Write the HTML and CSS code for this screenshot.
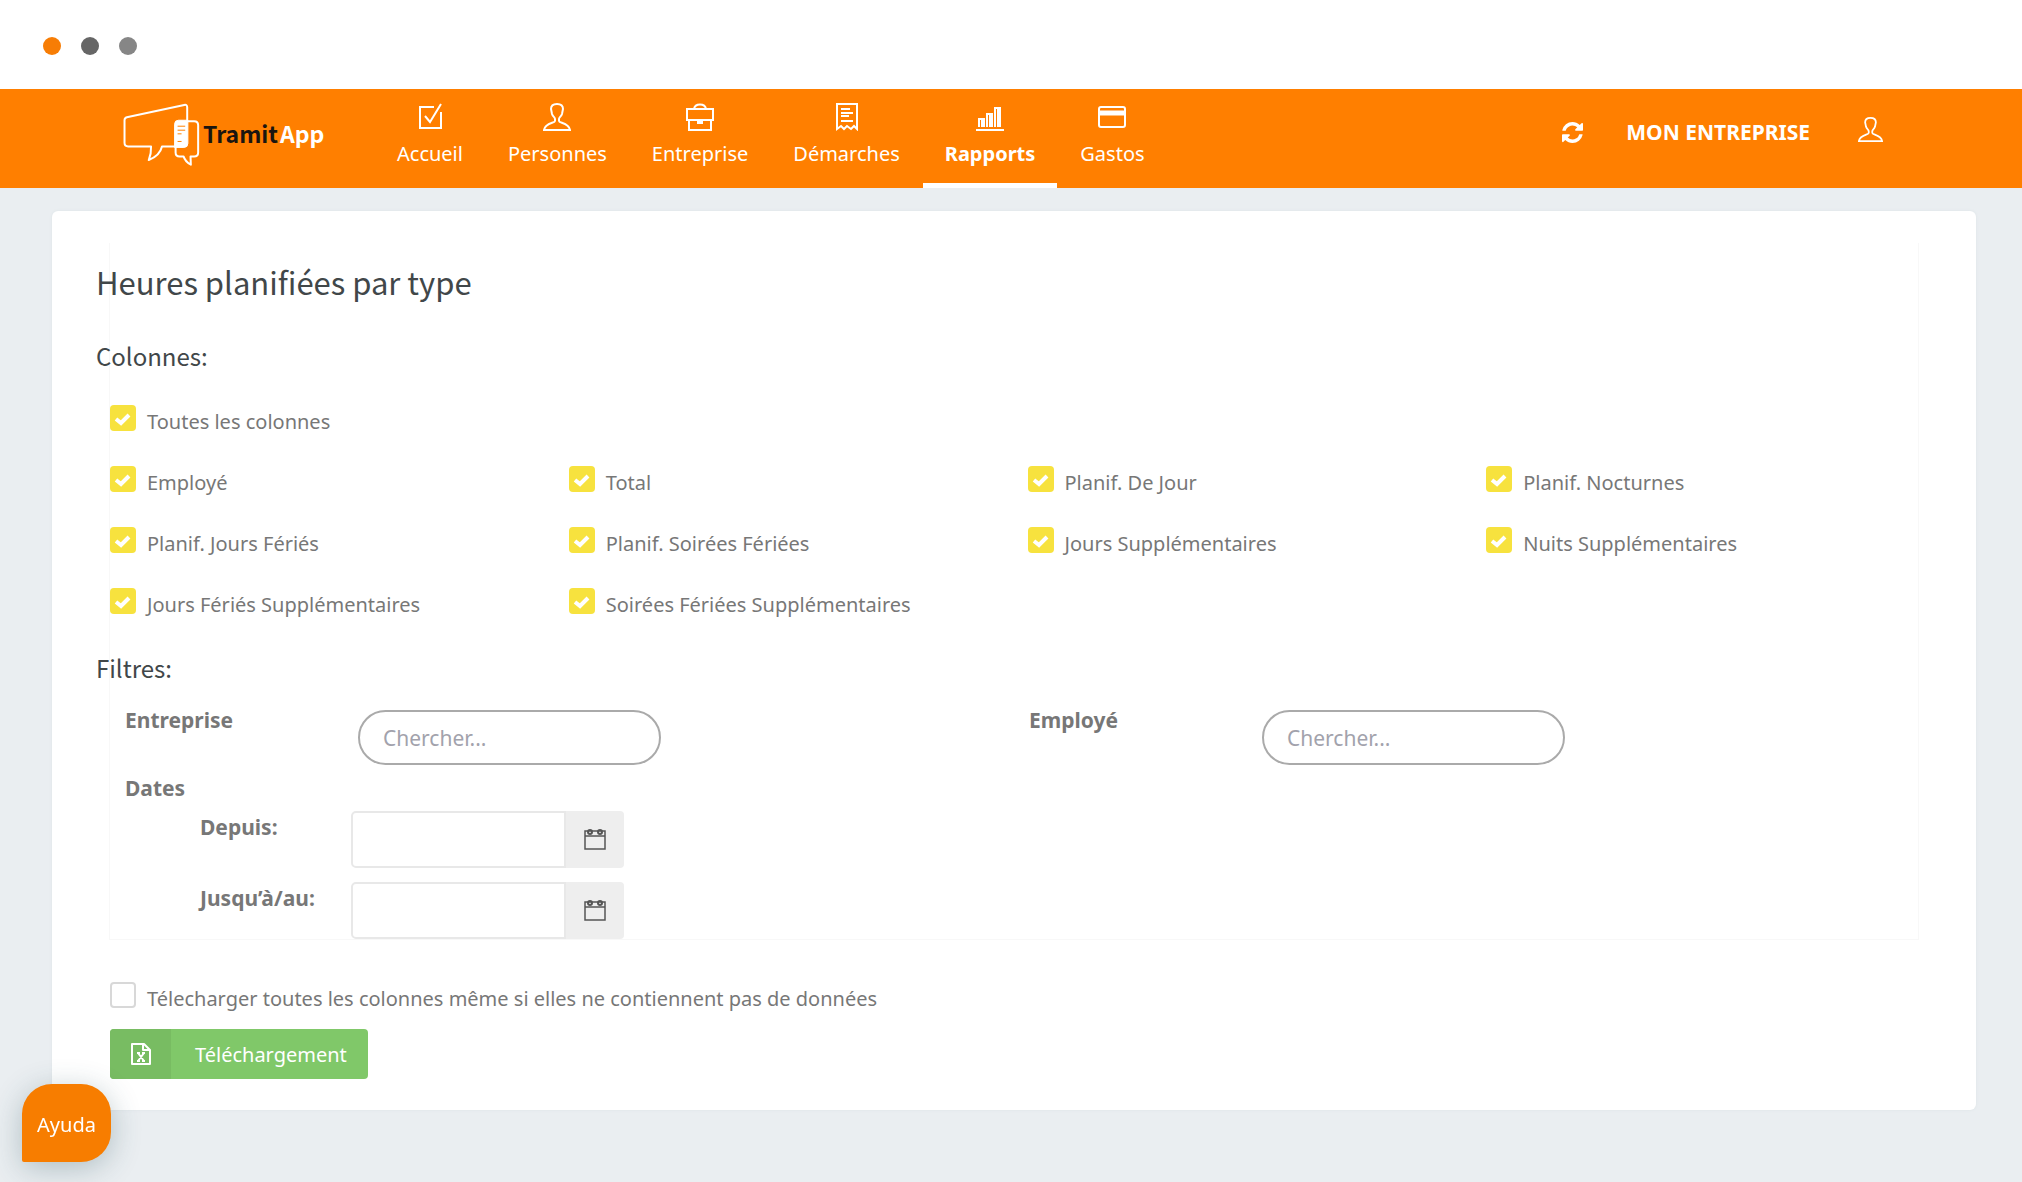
FILE: index.html
```html
<!DOCTYPE html>
<html lang="fr">
<head>
    <meta charset="UTF-8">
    <meta name="viewport" content="width=device-width, initial-scale=1.0">
    <title>Heures planifiées par type - TramitApp</title>
    <link rel="stylesheet" href="styles.css">
</head>
<body>
    <div class="window-bar">
        <span class="dot dot-orange"></span>
        <span class="dot dot-dark"></span>
        <span class="dot dot-grey"></span>
    </div>

    <header class="header">
        <a class="logo" href="#">
            <svg class="logo-mark" viewBox="366 306 234 196" fill="none" stroke="#fff" stroke-width="6" stroke-linejoin="round">
                <path d="M562 362V322q0-9-9-7L380 352q-7 2-7 9v68q0 11 11 11h69q1 22-7 41 34-14 40-41h40"/>
                <path d="M562 364h21q12 0 12 12v82q0 12-12 12h-11l1 25q-17-9-22-25h-12q-12 0-12-12v-20"/>
                <path d="M536 361h28v70q0 12-12 12h-28v-70q0-12 12-12z" fill="#fff" stroke-width="3"/>
                <path d="M533 379h23M533 391h23M533 402h12M533 425h12" stroke="#ff8000" stroke-width="3"/>
            </svg>
            <span class="logo-text">Tramit<span class="logo-app">App</span></span>
        </a>

        <nav class="nav">
            <a class="nav-item" href="#">
                <svg class="nav-icon" viewBox="0 0 28 28" fill="none" stroke="currentColor" stroke-width="2">
                    <path d="M18 4H4v21h21V9"/>
                    <path d="M9 13l5 6L25 1"/>
                </svg>
                Accueil
            </a>
            <a class="nav-item" href="#">
                <svg class="nav-icon" viewBox="0 0 28 28" fill="none" stroke="currentColor" stroke-width="2">
                    <path d="M14 1c4 0 6 2 6 5l-1 5c-1 3-3 3-3 5v2c0 2 10 2 11 9H1c1-7 11-7 11-9v-2c0-2-2-2-3-5L8 6c0-3 2-5 6-5z"/>
                </svg>
                Personnes
            </a>
            <a class="nav-item" href="#">
                <svg class="nav-icon" viewBox="0 0 28 28" fill="none" stroke="currentColor" stroke-width="2">
                    <path d="M1 6h26v11H1zM3 17v10h22V17M8 6c1-6 11-6 12 0"/>
                    <path d="M12 18h4v2h-4z"/>
                </svg>
                Entreprise
            </a>
            <a class="nav-item" href="#">
                <svg class="nav-icon" viewBox="0 0 28 28" fill="none" stroke="currentColor" stroke-width="2">
                    <path d="M4 26V1h20v25l-3-3-3 3-4-3-3 3-3-3z"/>
                    <path d="M8 6h9M8 10h12M8 13h8M8 18h12"/>
                </svg>
                Démarches
            </a>
            <a class="nav-item active" href="#" aria-current="page">
                <svg class="nav-icon" viewBox="0 0 28 28" fill="none" stroke="currentColor" stroke-width="2">
                    <path d="M0 27h28M3 24v-8h5v8M11 24V11h5v13M19 24V5h5v19"/>
                    <path d="M6 16v8M14 11v13M22 5v19"/>
                </svg>
                Rapports
            </a>
            <a class="nav-item" href="#">
                <svg class="nav-icon" viewBox="0 0 28 28" fill="none" stroke="currentColor" stroke-width="2">
                    <rect x="1" y="4" width="26" height="20" rx="2"/>
                    <path d="M1 10h26" stroke-width="5"/>
                </svg>
                Gastos
            </a>
        </nav>

        <div class="header-right">
            <button class="icon-button" type="button" aria-label="Actualiser">
                <svg class="refresh-icon" viewBox="0 0 1536 1536" fill="currentColor">
                    <path d="M1511 928q0 5-1 7-64 268-268 434.500T764 1536q-146 0-282.500-55T238 1324l-129 129q-19 19-45 19t-45-19-19-45V960q0-26 19-45t45-19h448q26 0 45 19t19 45-19 45l-137 137q71 66 161 102t187 36q134 0 250-65t186-179q11-17 53-117 8-23 30-23h192q13 0 22.500 9.500t9.500 22.500zM1536 128v448q0 26-19 45t-45 19h-448q-26 0-45-19t-19-45 19-45l138-138Q969 256 768 256q-134 0-250 65T332 500q-11 17-53 117-8 23-30 23H50q-13 0-22.500-9.500T18 608v-7q65-268 270-434.500T768 0q146 0 284 55.500T1297 212l130-129q19-19 45-19t45 19 19 45z"/>
                </svg>
            </button>
            <a class="company" href="#">MON ENTREPRISE</a>
            <button class="icon-button" type="button" aria-label="Mon compte">
                <svg class="user-icon" viewBox="0 0 28 28" fill="none" stroke="currentColor" stroke-width="2">
                    <path d="M14 1c4 0 6 2 6 5l-1 5c-1 3-3 3-3 5v2c0 2 10 2 11 9H1c1-7 11-7 11-9v-2c0-2-2-2-3-5L8 6c0-3 2-5 6-5z"/>
                </svg>
            </button>
        </div>
    </header>

    <main class="card">
        <div class="panel">
            <h1>Heures planifiées par type</h1>

            <h2>Colonnes:</h2>
            <div class="columns">
                <label class="check check-all"><input type="checkbox" checked><span>Toutes les colonnes</span></label>
                <label class="check"><input type="checkbox" checked><span>Employé</span></label>
                <label class="check"><input type="checkbox" checked><span>Total</span></label>
                <label class="check"><input type="checkbox" checked><span>Planif. De Jour</span></label>
                <label class="check"><input type="checkbox" checked><span>Planif. Nocturnes</span></label>
                <label class="check"><input type="checkbox" checked><span>Planif. Jours Fériés</span></label>
                <label class="check"><input type="checkbox" checked><span>Planif. Soirées Fériées</span></label>
                <label class="check"><input type="checkbox" checked><span>Jours Supplémentaires</span></label>
                <label class="check"><input type="checkbox" checked><span>Nuits Supplémentaires</span></label>
                <label class="check"><input type="checkbox" checked><span>Jours Fériés Supplémentaires</span></label>
                <label class="check"><input type="checkbox" checked><span>Soirées Fériées Supplémentaires</span></label>
            </div>

            <h2>Filtres:</h2>
            <div class="filters">
                <div class="filter">
                    <label for="entreprise">Entreprise</label>
                    <input class="search" id="entreprise" type="text" placeholder="Chercher...">
                </div>
                <div class="filter">
                    <label for="employe">Employé</label>
                    <input class="search" id="employe" type="text" placeholder="Chercher...">
                </div>
            </div>

            <div class="dates">
                <h3>Dates</h3>
                <div class="date-row">
                    <label for="depuis">Depuis:</label>
                    <div class="date-input">
                        <input id="depuis" type="text">
                        <button type="button" aria-label="Choisir la date de début">
                            <svg class="calendar-icon" viewBox="0 0 22 21" fill="none" stroke="currentColor" stroke-width="2">
                                <path d="M1 2h20v18H1zM1 7h20" stroke-width="1.500"/>
                                <circle cx="6" cy="3" r="2"/>
                                <circle cx="16" cy="3" r="2"/>
                            </svg>
                        </button>
                    </div>
                </div>
                <div class="date-row">
                    <label for="jusqua">Jusqu’à/au:</label>
                    <div class="date-input">
                        <input id="jusqua" type="text">
                        <button type="button" aria-label="Choisir la date de fin">
                            <svg class="calendar-icon" viewBox="0 0 22 21" fill="none" stroke="currentColor" stroke-width="2">
                                <path d="M1 2h20v18H1zM1 7h20" stroke-width="1.500"/>
                                <circle cx="6" cy="3" r="2"/>
                                <circle cx="16" cy="3" r="2"/>
                            </svg>
                        </button>
                    </div>
                </div>
            </div>
        </div>

        <div class="actions">
            <label class="check"><input type="checkbox"><span>Télecharger toutes les colonnes même si elles ne contiennent pas de données</span></label>
            <button class="download" type="button">
                <span class="download-icon">
                    <svg viewBox="0 0 20 24" fill="none" stroke="currentColor" stroke-width="2" stroke-linejoin="round">
                        <path d="M1 2h12l6 6v14H1zM12 2v6h7"/>
                        <path d="M7 11l6 8M13 11l-6 8M6 11h3M11 11h3M6 19h3M11 19h3"/>
                    </svg>
                </span>
                <span class="download-text">Téléchargement</span>
            </button>
        </div>
    </main>

    <button class="help" type="button">Ayuda</button>
</body>
</html>
```
FILE: styles.css
```css
* {
    box-sizing: border-box;
}
body {
    margin: 0;
    min-height: 100vh;
    background-color: #eaeef1;
    color: #777;
    font-family: 'Noto Sans', sans-serif;
    font-size: 20px;
    line-height: 30px;
}
a {
    color: inherit;
    text-decoration: none;
}
button, input {
    font: inherit;
}
button {
    border: none;
    cursor: pointer;
}

/* window bar */
.window-bar {
    display: flex;
    gap: 20px;
    padding: 37px 43px 34px;
    background-color: #fff;
}
.dot {
    width: 18px;
    height: 18px;
    border-radius: 50%;
}
.dot-orange {
    background-color: #f77d05;
}
.dot-dark {
    background-color: #666;
}
.dot-grey {
    background-color: #868686;
}

/* header */
.header {
    display: flex;
    padding: 0 139px 0 122px;
    background-color: #ff7f00;
    color: #fff;
}
.logo {
    display: flex;
    align-items: flex-start;
    width: 253px;
    padding-top: 13px;
}
.logo-mark {
    width: 78px;
    height: 65px;
    margin-right: 3px;
}
.logo-text {
    padding-top: 16px;
    color: #1a1510;
    font-family: 'Noto Sans CJK SC', sans-serif;
    font-size: 23px;
    font-weight: 700;
}
.logo-app {
    margin-left: 2px;
    color: #fff;
}
.nav {
    display: flex;
    gap: 1px;
}
.nav-item {
    display: flex;
    flex-direction: column;
    align-items: center;
    height: 99px;
    padding: 14px 22px 0;
    border-bottom: 5px solid transparent;
}
.nav-item.active {
    border-bottom-color: #fff;
    font-weight: 700;
}
.nav-icon {
    width: 28px;
    height: 28px;
    margin-bottom: 8px;
}
.header-right {
    display: flex;
    align-items: center;
    height: 86px;
    margin-left: auto;
}
.icon-button {
    display: flex;
    padding: 0;
    background: none;
    color: #fff;
}
.refresh-icon {
    width: 21px;
    height: 21px;
}
.user-icon {
    width: 25px;
    height: 25px;
    margin-bottom: 5px;
}
.company {
    margin: 0 48px 0 43px;
    font-size: 21px;
    font-weight: 700;
}

/* card */
.card {
    margin: 23px 46px 73px 52px;
    padding: 32px 57px 31px;
    background-color: #fff;
    border-radius: 6px;
    box-shadow: 0 0 3px #dce3e6;
}
.panel {
    border: 1px solid #f8f8f8;
    border-top: none;
}
h1, h2 {
    margin: 0 0 0 -14px;
    color: #414749;
    font-family: 'Noto Sans CJK SC', sans-serif;
    font-weight: 400;
}
h1 {
    padding: 19px 0 34px;
    font-size: 31px;
    line-height: 40px;
}
h2 {
    font-size: 24px;
    line-height: 40px;
}
.columns {
    display: grid;
    grid-template-columns: repeat(4, 1fr);
    row-gap: 29px;
    margin: 29px -27px 28px 0;
}
.check {
    display: flex;
    align-items: flex-start;
    gap: 11px;
}
.check-all {
    grid-column: 1 / -1;
}
.check span {
    padding-top: 2px;
}
.check input {
    flex: none;
    width: 26px;
    height: 26px;
    margin: 0;
    appearance: none;
    border: 2px solid #d8d8d8;
    border-radius: 4px;
    background-color: #fff;
}
.check input:checked {
    border: none;
    background: #f7e23e url("data:image/svg+xml,%3Csvg xmlns='http://www.w3.org/2000/svg' viewBox='0 0 26 26'%3E%3Cpath d='M6 14l5 4 8-8' fill='none' stroke='white' stroke-width='4'/%3E%3C/svg%3E");
}

/* filters */
.filters {
    display: grid;
    grid-template-columns: 1fr 1fr;
}
.filter {
    display: flex;
    padding-left: 15px;
}
.filter label, .dates label, .dates h3 {
    font-size: 21px;
    font-weight: 700;
}
.filter label {
    width: 233px;
    padding-top: 17px;
}
.search {
    width: 303px;
    height: 55px;
    margin-top: 22px;
    padding: 0 23px;
    border: 2px solid #aaa;
    border-radius: 28px;
    color: #777;
    font-size: 21px;
}
.search::placeholder {
    color: #a2a2ac;
}
.dates {
    padding-left: 15px;
}
.dates h3 {
    margin: 8px 0;
}
.date-row {
    display: flex;
    padding-left: 75px;
}
.date-row + .date-row {
    margin-top: 14px;
}
.date-row label {
    width: 151px;
    padding-top: 1px;
}
.date-input {
    display: flex;
    height: 57px;
}
.date-input input {
    width: 215px;
    padding: 0 12px;
    border: 2px solid #e8e8e8;
    border-radius: 5px 0 0 5px;
}
.date-input button {
    display: flex;
    align-items: center;
    justify-content: center;
    width: 58px;
    padding: 0;
    border-radius: 0 4px 4px 0;
    background-color: #eee;
    color: #555;
}
.calendar-icon {
    width: 22px;
    height: 21px;
}

/* download */
.actions {
    padding: 42px 0 0 1px;
}
.download {
    display: flex;
    height: 50px;
    margin-top: 15px;
    padding: 0;
    overflow: hidden;
    border-radius: 4px;
    background-color: #80c869;
    color: #fff;
}
.download-icon {
    display: flex;
    align-items: center;
    justify-content: center;
    align-self: stretch;
    width: 61px;
    background-color: #78bc62;
}
.download-icon svg {
    width: 20px;
    height: 24px;
}
.download-text {
    align-self: center;
    padding: 2px 21px 0 24px;
}

.help {
    position: fixed;
    bottom: 20px;
    left: 22px;
    width: 89px;
    height: 78px;
    padding: 4px 0 0;
    border-radius: 30px 30px 30px 2px;
    background-color: #f77d00;
    box-shadow: 0 6px 30px rgba(40, 80, 90, 0.3);
    color: #fff;
}
```
